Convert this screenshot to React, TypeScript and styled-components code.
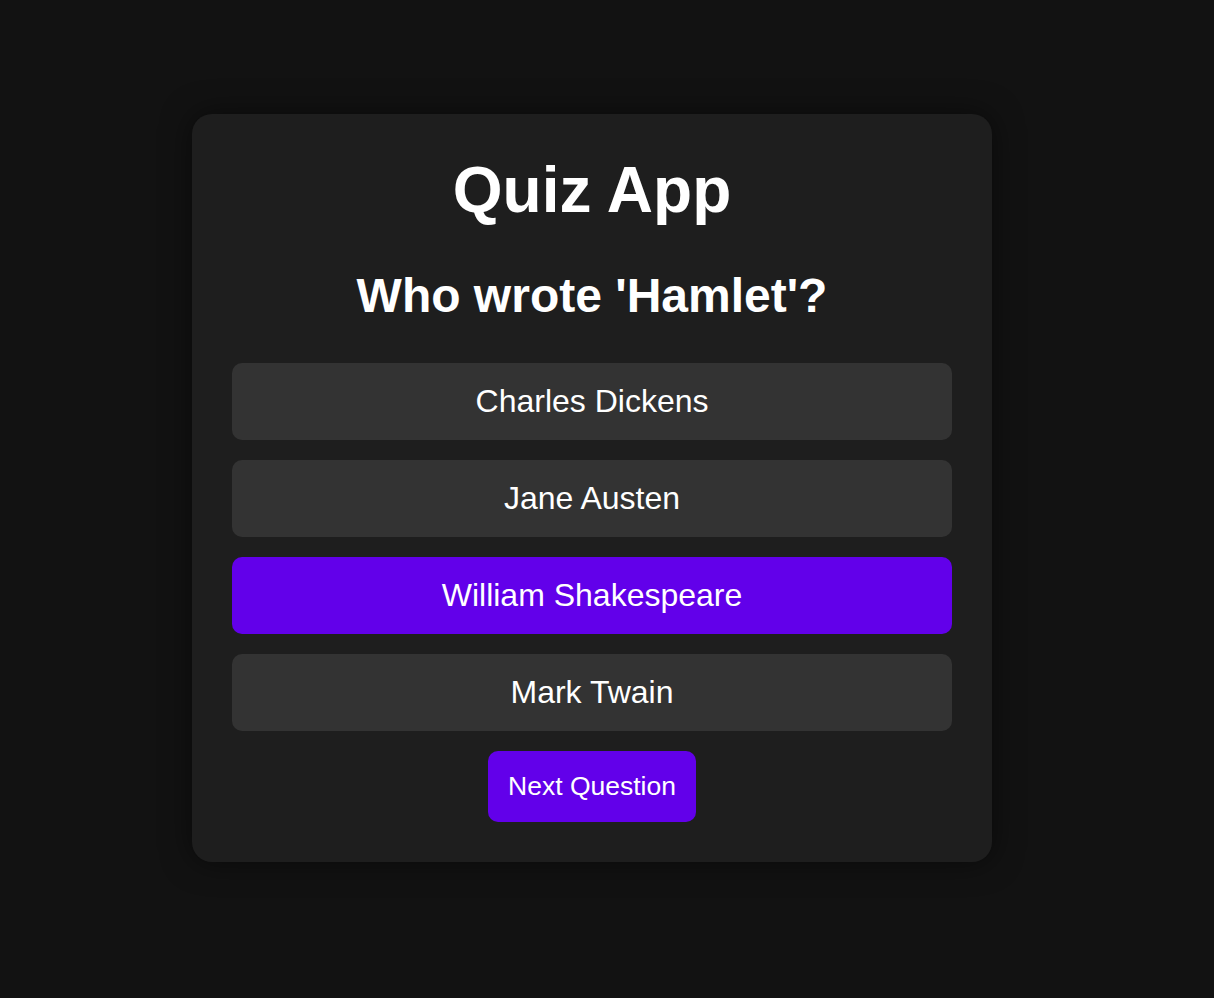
import styled, { createGlobalStyle } from 'styled-components';
import { useState } from 'react';

const GlobalStyle = createGlobalStyle`
  body {
    margin: 0;
    background-color: #121212;
    color: #ffffff;
    font-family: "Liberation Sans", Arial, sans-serif;
  }
`;

const Page = styled.div`
  min-height: 998px;
  display: flex;
  justify-content: center;
  padding: 114px 30px 0 0;
  box-sizing: border-box;
`;

const Card = styled.div`
  width: 800px;
  box-sizing: border-box;
  padding: 39px 40px 40px;
  background-color: #1e1e1e;
  border-radius: 20px;
  box-shadow: 0 0 30px rgba(0, 0, 0, 0.5);
  display: flex;
  flex-direction: column;
  align-items: center;
  align-self: flex-start;
`;

const Title = styled.h1`
  margin: 0;
  font-size: 64px;
  font-weight: bold;
`;

const Question = styled.h2`
  margin: 41px 0 40px;
  font-size: 48px;
  font-weight: bold;
`;

const Options = styled.div`
  width: 100%;
  display: flex;
  flex-direction: column;
  gap: 20px;
`;

const Option = styled.button<{ $selected: boolean }>`
  border: none;
  border-radius: 10px;
  padding: 20px;
  font-family: inherit;
  font-size: 32px;
  color: #ffffff;
  cursor: pointer;
  background-color: ${(p) => (p.$selected ? '#6200ea' : '#333333')};
`;

const NextButton = styled.button`
  margin-top: 20px;
  border: none;
  border-radius: 10px;
  padding: 20px;
  font-family: inherit;
  font-size: 26.5px;
  color: #ffffff;
  background-color: #6200ea;
  cursor: pointer;
`;

const options = ['Charles Dickens', 'Jane Austen', 'William Shakespeare', 'Mark Twain'];

export default function App() {
  const [selected, setSelected] = useState('William Shakespeare');

  return (
    <Page>
      <GlobalStyle />
      <Card>
        <Title>Quiz App</Title>
        <Question>Who wrote 'Hamlet'?</Question>
        <Options>
          {options.map((o) => (
            <Option key={o} $selected={o === selected} onClick={() => setSelected(o)}>
              {o}
            </Option>
          ))}
        </Options>
        <NextButton>Next Question</NextButton>
      </Card>
    </Page>
  );
}
